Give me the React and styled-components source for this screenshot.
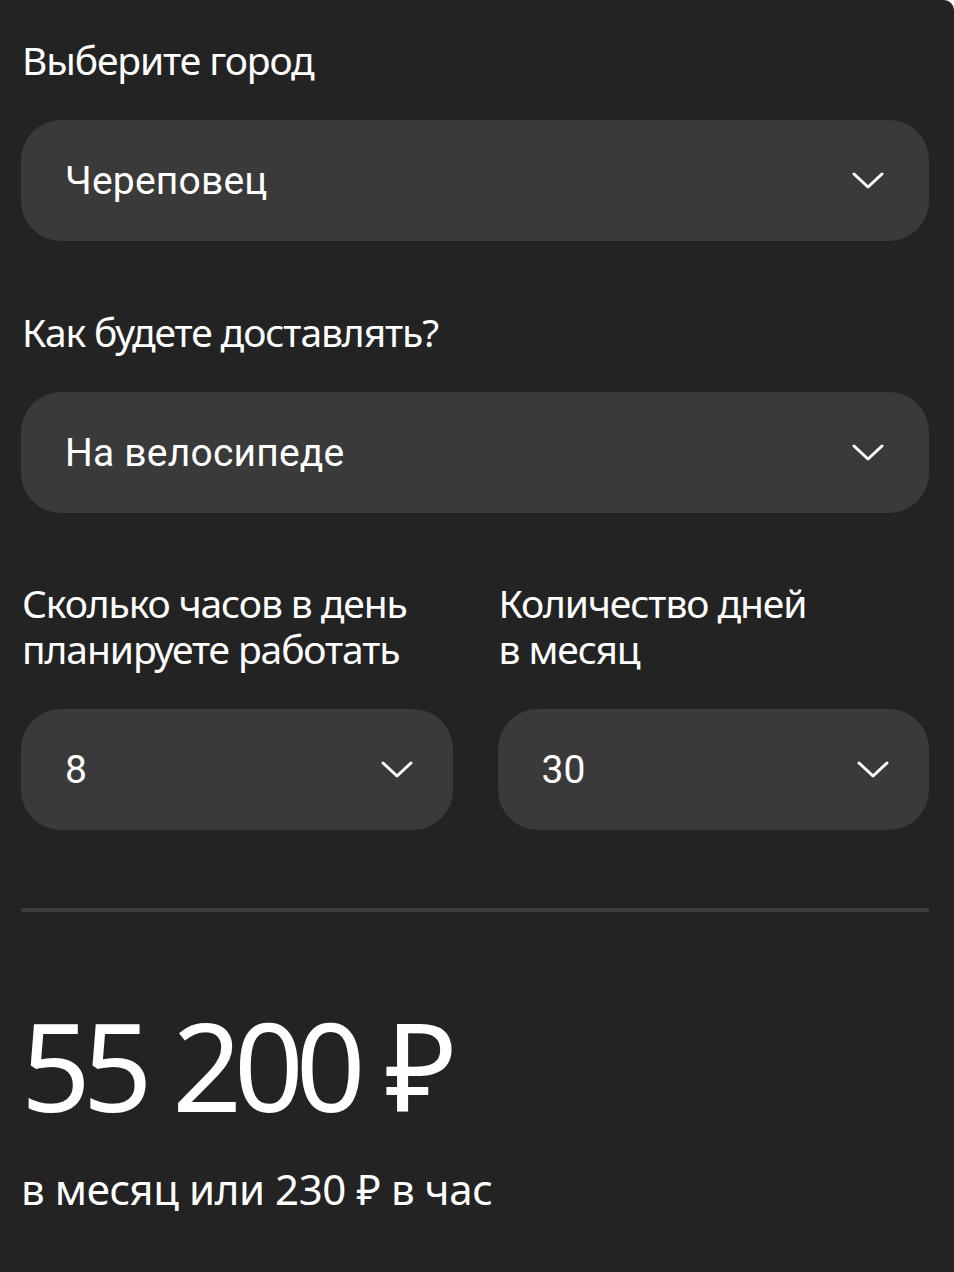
import React from "react";
import styled, { createGlobalStyle } from "styled-components";

const Global = createGlobalStyle`
  html, body { margin: 0; padding: 0; background: #ffffff; }
  body { font-family: "Noto Sans", "Open Sans", sans-serif; }
  #root { min-height: 100vh; }
`;

const Page = styled.main`
  box-sizing: border-box;
  min-height: 100vh;
  background: #232323;
  border-top-right-radius: 10px;
  padding: 37px 25px 40px 21px;
  color: #ffffff;
  display: flex;
  flex-direction: column;
`;

const Field = styled.section`
  display: flex;
  flex-direction: column;
  gap: 37px;
  min-width: 0;
`;

const Label = styled.h2`
  margin: 0;
  font-family: "Noto Sans", "Open Sans", sans-serif;
  font-weight: 400;
  font-size: 39px;
  line-height: 46px;
  letter-spacing: -1.1px;
  color: #ffffff;
  padding-left: 1px;
  white-space: nowrap;
`;

const Select = styled.div`
  box-sizing: border-box;
  height: 121px;
  border-radius: 40px;
  background: #3a3a3a;
  display: flex;
  align-items: center;
  justify-content: space-between;
  padding: 0 ${(p) => (p.$compact ? 40 : 45)}px 0 44px;
`;

const Value = styled.span`
  font-family: Roboto, "Liberation Sans", sans-serif;
  font-size: 39px;
  color: #ffffff;
  letter-spacing: 0.2px;
`;

const Stack = styled.div`
  display: flex;
  flex-direction: column;
  gap: 68px;
`;

const Row = styled.div`
  display: grid;
  grid-template-columns: 1fr 1fr;
  column-gap: 45px;
  margin-top: 67px;
`;

const Divider = styled.hr`
  margin: 78px 0 0;
  border: none;
  height: 4px;
  background: #3b3b3b;
`;

const Total = styled.div`
  margin-top: 92px;
  font-family: "Noto Sans", "Open Sans", sans-serif;
  font-size: 122px;
  line-height: 122px;
  letter-spacing: -8px;
  word-spacing: 4px;
  color: #ffffff;
`;

const Sub = styled.div`
  margin-top: 39px;
  font-family: "Noto Sans", "Open Sans", sans-serif;
  font-size: 42px;
  line-height: 48px;
  letter-spacing: -0.4px;
  color: #ffffff;
`;

const Chevron = () => (
  <svg width="32" height="17" viewBox="0 0 32 17" fill="none">
    <polyline
      points="2,2 16,15 30,2"
      stroke="#ffffff"
      strokeWidth="3"
      strokeLinecap="round"
      strokeLinejoin="round"
    />
  </svg>
);

const Dropdown = ({ value, compact }) => (
  <Select $compact={compact}>
    <Value>{value}</Value>
    <Chevron />
  </Select>
);

export default function App() {
  return (
    <>
      <Global />
      <Page>
        <Stack>
          <Field>
            <Label>Выберите город</Label>
            <Dropdown value="Череповец" />
          </Field>
          <Field>
            <Label>Как будете доставлять?</Label>
            <Dropdown value="На велосипеде" />
          </Field>
        </Stack>
        <Row>
          <Field>
            <Label>
              Сколько часов в день
              <br />
              планируете работать
            </Label>
            <Dropdown value="8" compact />
          </Field>
          <Field>
            <Label>
              Количество дней
              <br />в месяц
            </Label>
            <Dropdown value="30" compact />
          </Field>
        </Row>
        <Divider />
        <Total>55 200 ₽</Total>
        <Sub>в месяц или 230 ₽ в час</Sub>
      </Page>
    </>
  );
}
